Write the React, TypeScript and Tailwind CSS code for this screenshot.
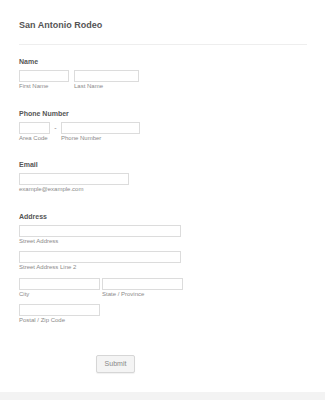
const font = { fontFamily: '"Liberation Sans", Arial, sans-serif' }

function Box({ w }: { w: string }) {
  return <div className={`h-[12px] border border-[#dcdcdc] bg-white ${w}`} />
}

function Sub({ children }: { children: React.ReactNode }) {
  return <div className="h-[8px] text-[6px] leading-[8px] text-[#8a8a8a] whitespace-nowrap">{children}</div>
}

function Label({ children }: { children: React.ReactNode }) {
  return <div className="h-[9px] text-[7px] leading-[9px] font-bold text-[#555]">{children}</div>
}

export default function App() {
  return (
    <div className="w-[325px] h-[400px] bg-white flex flex-col" style={font}>
      <div className="px-[19px] pt-[19px] flex-1">
        <h1 className="text-[9px] leading-[12px] font-bold text-[#555]">San Antonio Rodeo</h1>
        <div className="mt-[13px] mr-[-1px] border-t border-[#eeeeee]" />

        <div className="mt-[12px] mb-[19px]">
          <Label>Name</Label>
          <div className="mt-[4px] flex gap-[5px]">
            <div>
              <Box w="w-[50px]" />
              <Sub>First Name</Sub>
            </div>
            <div>
              <Box w="w-[65px]" />
              <Sub>Last Name</Sub>
            </div>
          </div>
        </div>

        <div className="mb-[18px]">
          <Label>Phone Number</Label>
          <div className="mt-[4px] flex">
            <div>
              <Box w="w-[31px]" />
              <Sub>Area Code</Sub>
            </div>
            <div className="w-[11px] text-center text-[7px] leading-[12px] text-[#888]">-</div>
            <div>
              <Box w="w-[79px]" />
              <Sub>Phone Number</Sub>
            </div>
          </div>
        </div>

        <div className="mb-[19px]">
          <Label>Email</Label>
          <div className="mt-[4px]">
            <Box w="w-[110px]" />
            <Sub>example@example.com</Sub>
          </div>
        </div>

        <div>
          <Label>Address</Label>
          <div className="mt-[4px] flex flex-col">
            <div>
              <Box w="w-[162px]" />
              <Sub>Street Address</Sub>
            </div>
            <div className="mt-[6px]">
              <Box w="w-[162px]" />
              <Sub>Street Address Line 2</Sub>
            </div>
            <div className="mt-[7px] flex gap-[2px]">
              <div>
                <Box w="w-[81px]" />
                <Sub>City</Sub>
              </div>
              <div>
                <Box w="w-[81px]" />
                <Sub>State / Province</Sub>
              </div>
            </div>
            <div className="mt-[6px]">
              <Box w="w-[81px]" />
              <Sub>Postal / Zip Code</Sub>
            </div>
          </div>
        </div>

        <button className="mt-[31px] ml-[77px] h-[18px] w-[39px] rounded-[2px] border border-[#d6d6d6] bg-[#f4f4f4] text-[7px] text-[#888] shadow-[0_1px_1px_rgba(0,0,0,0.06)]">
          Submit
        </button>
      </div>
      <div className="h-[8px] bg-[#f3f3f3]" />
    </div>
  )
}
